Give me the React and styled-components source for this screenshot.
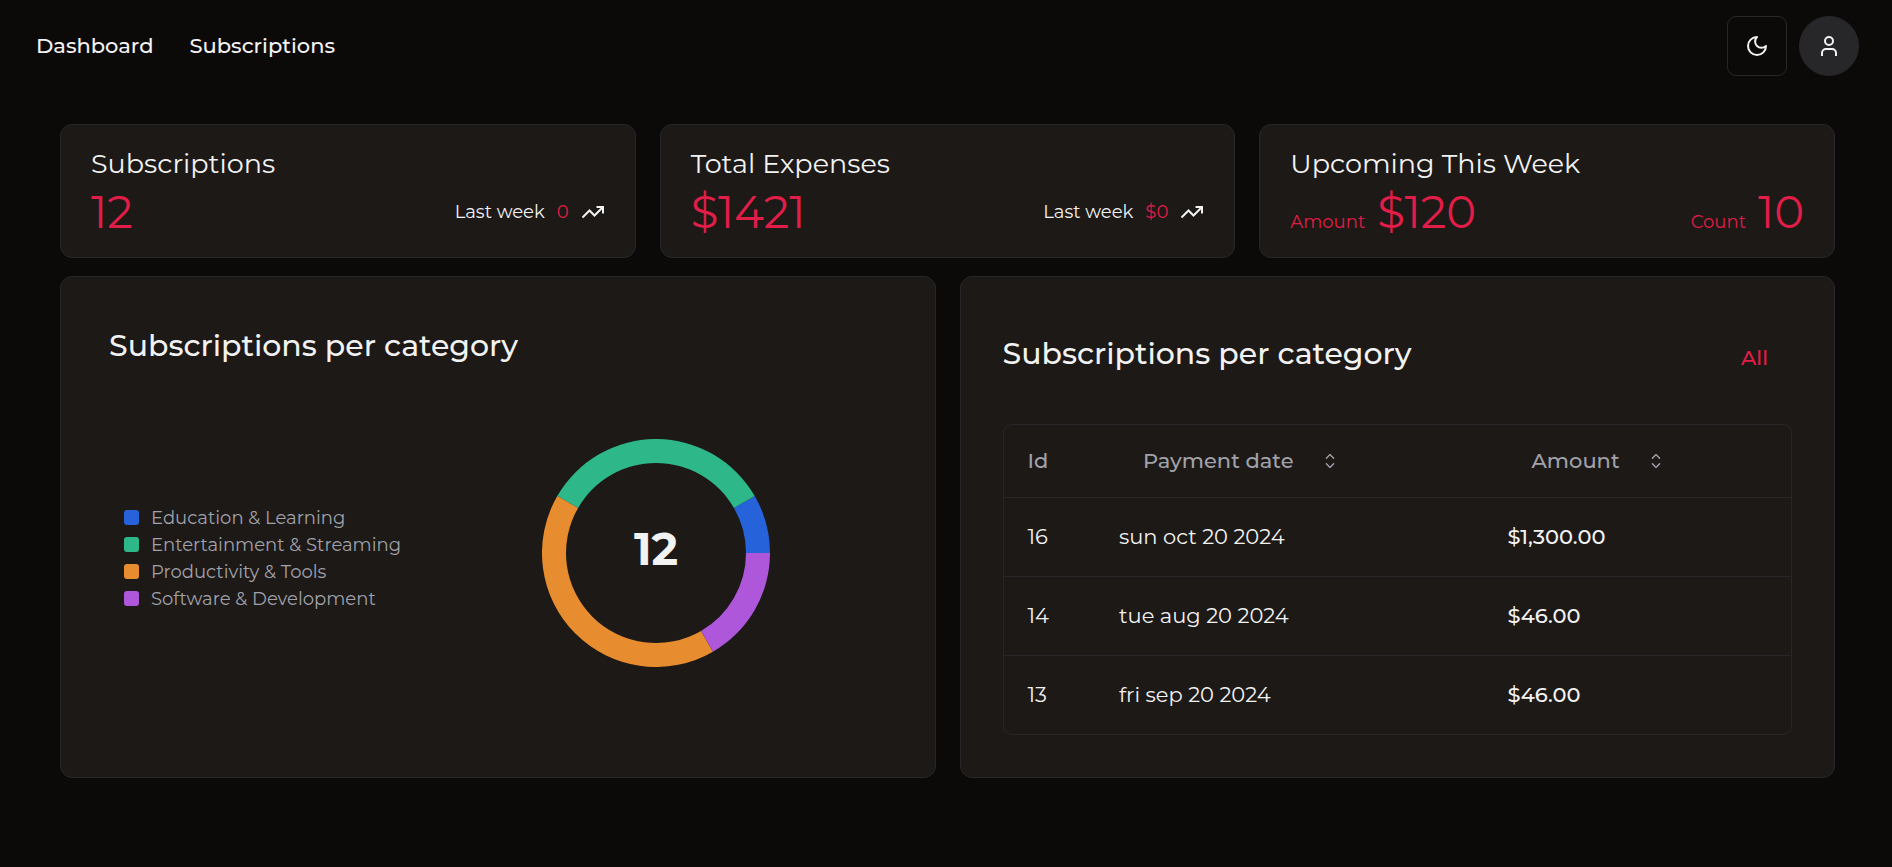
import React from 'react';
import styled, { createGlobalStyle } from 'styled-components';
import { RxCaretSort } from 'react-icons/rx';

const colors = {
  page: '#0c0a09',
  card: '#1c1917',
  border: '#27272a',
  text: '#f2f2f2',
  muted: '#a1a1aa',
  accent: '#e11d48',
};

const GlobalStyle = createGlobalStyle`
  *, *::before, *::after { box-sizing: border-box; }
  body {
    margin: 0;
    background: ${colors.page};
    color: ${colors.text};
    font-family: Montserrat, Inter, "Open Sans", sans-serif;
  }
`;

const Text = styled.span`
  display: inline-block;
  font-size: ${(p) => p.$size}px;
  font-weight: ${(p) => p.$weight || 400};
  line-height: ${(p) => p.$line || 'normal'};
  color: ${(p) => p.$color || 'inherit'};
  white-space: nowrap;
`;

const Page = styled.div`
  min-height: 867px;
`;

const Header = styled.header`
  display: flex;
  align-items: center;
  justify-content: space-between;
  height: 92px;
  padding: 0 33px 0 36px;
`;

const Nav = styled.nav`
  display: flex;
  gap: 36px;
`;

const Actions = styled.div`
  display: flex;
  gap: 12px;
`;

const IconButton = styled.button`
  display: grid;
  place-items: center;
  width: 60px;
  height: 60px;
  padding: 0;
  color: ${colors.text};
  background: ${(p) => (p.$round ? colors.border : 'transparent')};
  border: 1px solid ${colors.border};
  border-radius: ${(p) => (p.$round ? '50%' : '9px')};
`;

const Main = styled.main`
  display: grid;
  gap: 18px;
  padding: 32px 57px 0 60px;
`;

const Stats = styled.section`
  display: grid;
  grid-template-columns: repeat(3, 1fr);
  gap: 24px;
`;

const Panels = styled.section`
  display: grid;
  grid-template-columns: repeat(2, 1fr);
  gap: 24px;
`;

const Card = styled.article`
  background: ${colors.card};
  border: 1px solid ${colors.border};
  border-radius: 12px;
`;

const StatCard = styled(Card)`
  display: grid;
  height: 134px;
  padding: 18px 30px;
`;

const StatRow = styled.div`
  display: flex;
  align-items: center;
  justify-content: space-between;
`;

const Group = styled.div`
  display: flex;
  align-items: ${(p) => p.$align || 'center'};
  gap: 12px;
`;

const ChartCard = styled(Card)`
  display: flex;
  flex-direction: column;
  height: 502px;
  padding: 51px 48px 25px;
`;

const ChartBody = styled.div`
  display: flex;
  flex: 1;
  align-items: center;
  padding-left: 15px;
`;

const Legend = styled.ul`
  width: 418px;
  margin: 0;
  padding: 0;
  list-style: none;
`;

const LegendItem = styled.li`
  display: flex;
  align-items: center;
  gap: 12px;
  height: 27px;
  color: ${colors.muted};
`;

const Swatch = styled.span`
  width: 15px;
  height: 15px;
  border-radius: 3px;
  background: ${(p) => p.$color};
`;

const DonutSvg = styled.svg`
  display: block;
  margin-bottom: 10px;
`;

const DonutTotal = styled.text`
  fill: ${colors.text};
  font-size: 45px;
  font-weight: 700;
`;

const TableCard = styled(Card)`
  height: 502px;
  padding: 57px 42px 0;
`;

const TableHeading = styled.div`
  display: flex;
  align-items: center;
  justify-content: space-between;
  height: 39px;
  padding-right: 24px;
`;

const AllLink = styled.a`
  padding-top: 8px;
  color: ${colors.accent};
`;

const Table = styled.div`
  margin-top: 51px;
  border: 1px solid ${colors.border};
  border-radius: 9px;
`;

const Row = styled.div`
  display: grid;
  grid-template-columns: 91.5px 388.5px 1fr;
  align-items: center;
  height: ${(p) => (p.$head ? 73 : 79)}px;
  color: ${(p) => (p.$head ? colors.muted : 'inherit')};
  border-bottom: 1px solid ${colors.border};
  &:last-child {
    height: 78px;
    border-bottom: 0;
  }
`;

const Cell = styled.div`
  padding: 0 24px;
`;

const SortButton = styled.div`
  display: flex;
  align-items: center;
  gap: 24px;
  padding-left: 24px;
`;

const SortIcon = styled(RxCaretSort)`
  width: 24px;
  height: 24px;
`;

const Moon = () => (
  <svg width="24" height="24" viewBox="0 0 24 24" fill="none" stroke="currentColor" strokeWidth="2">
    <path d="M12 3a6 6 0 0 0 9 9 9 9 0 1 1-9-9Z" strokeLinejoin="round" />
  </svg>
);

const Person = () => (
  <svg width="24" height="24" viewBox="0 0 24 24" fill="none" stroke="currentColor" strokeWidth="2">
    <circle cx="12" cy="7" r="4" />
    <path d="M5 22v-3a4 4 0 0 1 4-4h6a4 4 0 0 1 4 4v3" />
  </svg>
);

const Trend = () => (
  <svg width="24" height="24" viewBox="0 0 24 24" fill="none" stroke="currentColor" strokeWidth="2">
    <path d="M22 7 13.5 15.5 8.5 10.5 1.5 17.5" />
    <path d="M15.5 7h6.5v6.5" />
  </svg>
);

const categories = [
  { name: 'Education & Learning', count: 1, color: '#2662d9' },
  { name: 'Entertainment & Streaming', count: 4, color: '#2eb88a' },
  { name: 'Productivity & Tools', count: 5, color: '#e88c30' },
  { name: 'Software & Development', count: 2, color: '#af57db' },
];

const payments = [
  { id: '16', date: 'sun oct 20 2024', amount: '$1,300.00' },
  { id: '14', date: 'tue aug 20 2024', amount: '$46.00' },
  { id: '13', date: 'fri sep 20 2024', amount: '$46.00' },
];

const point = (radius, angle) =>
  `${(114 + radius * Math.cos(angle)).toFixed(2)} ${(114 - radius * Math.sin(angle)).toFixed(2)}`;

function Donut() {
  const total = categories.reduce((sum, c) => sum + c.count, 0);
  let start = 0;
  return (
    <DonutSvg width="228" height="228" viewBox="0 0 228 228">
      {categories.map((c) => {
        const end = start + (c.count / total) * Math.PI * 2;
        const d = `M${point(114, start)}A114 114 0 0 0 ${point(114, end)}L${point(90, end)}A90 90 0 0 1 ${point(90, start)}Z`;
        start = end;
        return <path key={c.name} d={d} fill={c.color} />;
      })}
      <DonutTotal x="114" y="126" textAnchor="middle">{total}</DonutTotal>
    </DonutSvg>
  );
}

const StatTitle = (props) => <Text $size={27} $line="42px" {...props} />;
const Figure = (props) => <Text $size={45} $line="54px" $color={colors.accent} {...props} />;
const Small = (props) => <Text $size={18} {...props} />;
const Body = (props) => <Text $size={21} $weight={500} $line="30px" {...props} />;
const PanelTitle = (props) => <Text $size={30} $weight={500} $line="36px" {...props} />;

export default function App() {
  return (
    <Page>
      <GlobalStyle />
      <Header>
        <Nav>
          <Body>Dashboard</Body>
          <Body>Subscriptions</Body>
        </Nav>
        <Actions>
          <IconButton aria-label="Toggle theme"><Moon /></IconButton>
          <IconButton $round aria-label="Account"><Person /></IconButton>
        </Actions>
      </Header>
      <Main>
        <Stats>
          <StatCard>
            <StatTitle>Subscriptions</StatTitle>
            <StatRow>
              <Figure>12</Figure>
              <Group>
                <Small>Last week</Small>
                <Small $color={colors.accent}>0</Small>
                <Trend />
              </Group>
            </StatRow>
          </StatCard>
          <StatCard>
            <StatTitle>Total Expenses</StatTitle>
            <StatRow>
              <Figure>$1421</Figure>
              <Group>
                <Small>Last week</Small>
                <Small $color={colors.accent}>$0</Small>
                <Trend />
              </Group>
            </StatRow>
          </StatCard>
          <StatCard>
            <StatTitle>Upcoming This Week</StatTitle>
            <StatRow>
              <Group $align="baseline">
                <Small $color={colors.accent}>Amount</Small>
                <Figure>$120</Figure>
              </Group>
              <Group $align="baseline">
                <Small $color={colors.accent}>Count</Small>
                <Figure>10</Figure>
              </Group>
            </StatRow>
          </StatCard>
        </Stats>
        <Panels>
          <ChartCard>
            <PanelTitle>Subscriptions per category</PanelTitle>
            <ChartBody>
              <Legend>
                {categories.map((c) => (
                  <LegendItem key={c.name}>
                    <Swatch $color={c.color} />
                    <Small>{c.name}</Small>
                  </LegendItem>
                ))}
              </Legend>
              <Donut />
            </ChartBody>
          </ChartCard>
          <TableCard>
            <TableHeading>
              <PanelTitle>Subscriptions per category</PanelTitle>
              <AllLink><Body>All</Body></AllLink>
            </TableHeading>
            <Table>
              <Row $head>
                <Cell><Body>Id</Body></Cell>
                <Cell><SortButton><Body>Payment date</Body><SortIcon /></SortButton></Cell>
                <Cell><SortButton><Body>Amount</Body><SortIcon /></SortButton></Cell>
              </Row>
              {payments.map((p) => (
                <Row key={p.id}>
                  <Cell><Body $weight={400}>{p.id}</Body></Cell>
                  <Cell><Body $weight={400}>{p.date}</Body></Cell>
                  <Cell><Body>{p.amount}</Body></Cell>
                </Row>
              ))}
            </Table>
          </TableCard>
        </Panels>
      </Main>
    </Page>
  );
}
